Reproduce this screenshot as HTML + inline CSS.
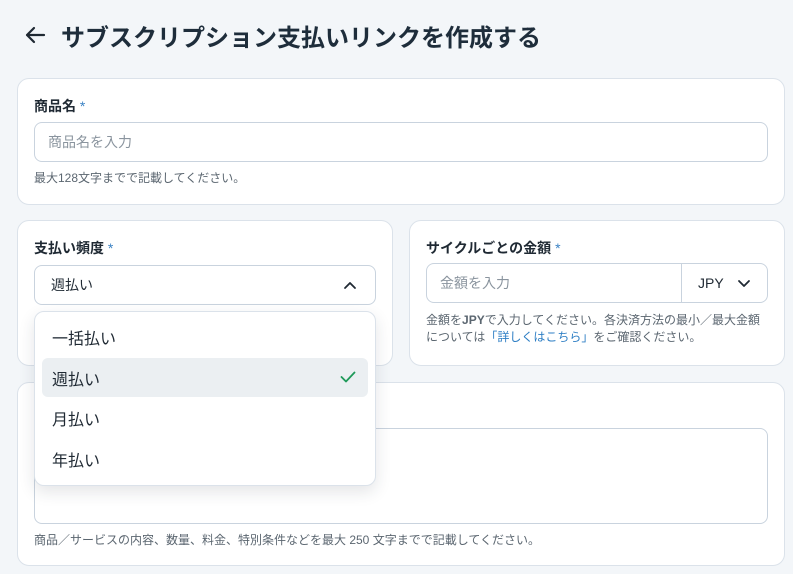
<!DOCTYPE html>
<html><head><meta charset="utf-8"><style>
*{box-sizing:border-box;margin:0;padding:0}
body{width:793px;height:574px;overflow:hidden;background:#f3f6f9;font-family:"Liberation Sans","Noto Sans CJK JP",sans-serif;color:#1f2933;position:relative}
.abs{position:absolute}
.card{position:absolute;background:#fff;border:1px solid #dbe2ea;border-radius:12px}
.lbl{position:absolute;font-size:14px;font-weight:bold;color:#1f2933}
.lbl b{color:#3b82c4;font-weight:normal}
.inp{position:absolute;border:1px solid #c9d3de;border-radius:8px;background:#fff;font-size:14px;color:#8a949e;display:flex;align-items:center;padding-left:13px}
.help{position:absolute;font-size:12px;color:#5b6670;line-height:17px}
.item{position:absolute;left:7px;right:7px;height:39px;border-radius:6px;font-size:16px;display:flex;align-items:center;padding-left:10px;color:#1f2933}
</style></head><body>
<svg class="abs" style="left:24px;top:25px" width="22" height="20" viewBox="0 0 22 20"><path d="M20 10H3M10 3L3 10l7 7" fill="none" stroke="#1f2933" stroke-width="2.2" stroke-linecap="round" stroke-linejoin="round"/></svg>
<div class="abs" style="left:61px;top:18px;font-size:24px;font-weight:bold;color:#1e2d3b">サブスクリプション支払いリンクを作成する</div>

<div class="card" style="left:17px;top:78px;width:768px;height:127px">
<div class="lbl" style="left:16px;top:17px">商品名 <b>*</b></div>
<div class="inp" style="left:16px;top:43px;width:734px;height:40px">商品名を入力</div>
<div class="help" style="left:16px;top:91px">最大128文字までで記載してください。</div>
</div>

<div class="card" style="left:17px;top:220px;width:376px;height:146px">
<div class="lbl" style="left:16px;top:17px">支払い頻度 <b>*</b></div>
<div class="inp" style="left:16px;top:44px;width:342px;height:40px;color:#1f2933;padding-left:16px">週払い
<svg class="abs" style="right:18px;top:15px" width="14" height="9" viewBox="0 0 14 9"><path d="M2 7l5-5 5 5" fill="none" stroke="#1f2933" stroke-width="1.8" stroke-linecap="round" stroke-linejoin="round"/></svg></div>
</div>

<div class="card" style="left:409px;top:220px;width:376px;height:146px">
<div class="lbl" style="left:16px;top:17px">サイクルごとの金額 <b>*</b></div>
<div class="inp" style="left:16px;top:42px;width:342px;height:40px">金額を入力
<div class="abs" style="left:254px;top:0;bottom:0;border-left:1px solid #c9d3de;width:87px;color:#1f2933;display:flex;align-items:center;padding-left:16px">JPY
<svg class="abs" style="left:55px;top:15px" width="14" height="9" viewBox="0 0 14 9"><path d="M2 2l5 5 5-5" fill="none" stroke="#1f2933" stroke-width="1.8" stroke-linecap="round" stroke-linejoin="round"/></svg></div></div>
<div class="help" style="left:16px;top:91px">金額を<b>JPY</b>で入力してください。各決済方法の最小／最大金額<br>については<span style="color:#2d7ec4">「詳しくはこちら」</span>をご確認ください。</div>
</div>

<div class="card" style="left:17px;top:382px;width:768px;height:184px">
<div class="lbl" style="left:16px;top:17px">商品説明</div>
<div class="inp" style="left:16px;top:45px;width:734px;height:96px"></div>
<div class="help" style="left:16px;top:149px">商品／サービスの内容、数量、料金、特別条件などを最大 250 文字までで記載してください。</div>
</div>

<div class="abs" style="left:34px;top:311px;width:342px;height:175px;background:#fff;border:1px solid #dbe2ea;border-radius:10px;box-shadow:0 6px 16px rgba(30,45,60,.12)">
<div class="item" style="top:5px">一括払い</div>
<div class="item" style="top:46px;background:#ebeff2">週払い
<svg class="abs" style="right:12px;top:13px" width="16" height="12" viewBox="0 0 16 12"><path d="M1.5 6l4.5 4.5L14.5 1.5" fill="none" stroke="#1f9a5a" stroke-width="1.8" stroke-linecap="round" stroke-linejoin="round"/></svg></div>
<div class="item" style="top:86px">月払い</div>
<div class="item" style="top:127px">年払い</div>
</div>
</body></html>
